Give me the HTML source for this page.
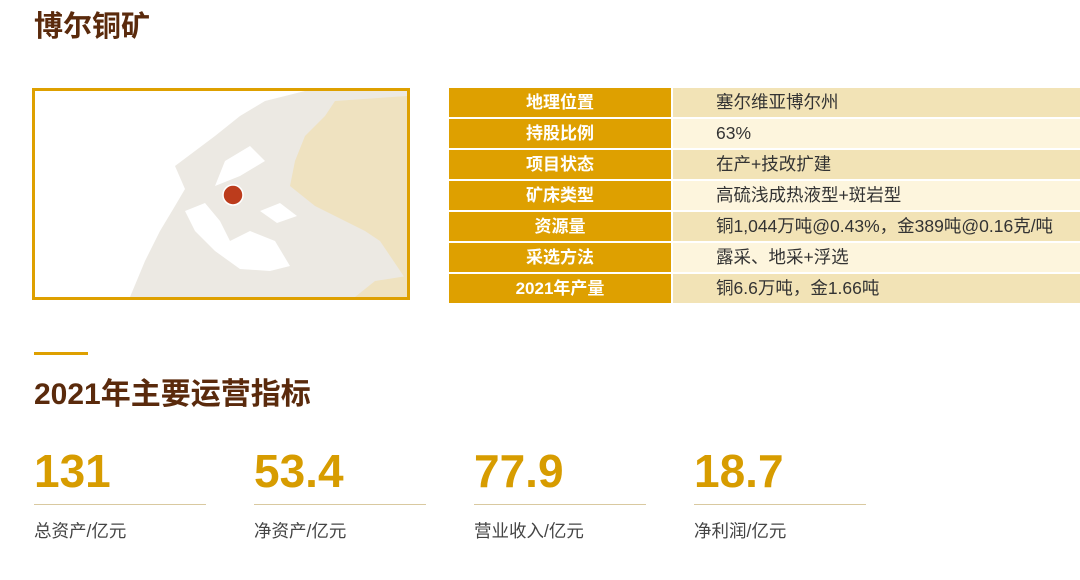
<!DOCTYPE html>
<html><head><meta charset="utf-8"><style>
body{margin:0;width:1080px;height:580px;background:#fff;font-family:"Liberation Sans","Noto Sans CJK SC",sans-serif;position:relative;overflow:hidden}
.t{position:absolute;left:34px;top:3px;font-size:29px;font-weight:bold;color:#5a2a0c}
.map{position:absolute;left:32px;top:88px;width:372px;height:206px;border:3px solid #dea000;overflow:hidden;background:#fff}
table{position:absolute;left:449px;top:88px;width:631px;border-collapse:collapse}
td{height:29px;line-height:29px;padding:0;border-bottom:2px solid #fff;font-size:17.5px;color:#333;vertical-align:middle;white-space:nowrap}
td.l{width:222px;background:#dea000;color:#fff;font-weight:bold;text-align:center;border-right:2px solid #fff;font-size:17px}
td.v{padding-left:43px}
tr:nth-child(odd) td.v{background:#f2e3b6}
tr:nth-child(even) td.v{background:#fdf5dd}
.bar{position:absolute;left:34px;top:352px;width:54px;height:3px;background:#dea000}
.h{position:absolute;left:34px;top:369px;font-size:30px;font-weight:bold;color:#5a2a0c}
.k{position:absolute;top:443px;width:172px;border-bottom:1px solid #d9c9a0;height:61px}
.k b{font-size:46px;color:#d79c00;line-height:56px}
.c{position:absolute;top:518px;font-size:17.5px;color:#444}
</style></head><body>
<div class="t">博尔铜矿</div>
<div class="map"><svg width="372" height="206" viewBox="0 0 372 206">
<path d="M95 206 L110 170 L125 140 L140 115 L150 98 L140 75 L160 60 L180 45 L205 25 L230 10 L270 0 L372 0 L372 206 Z" fill="#ece9e3"/>
<path d="M260 70 L270 45 L290 25 L300 10 L372 5 L372 190 L345 150 L330 140 L310 130 L280 115 L255 95 Z" fill="#efe2c0"/>
<path d="M320 206 L340 190 L372 185 L372 206 Z" fill="#efe2c0"/>
<path d="M150 120 L170 112 L185 130 L195 150 L215 140 L240 150 L255 175 L235 180 L205 178 L180 160 L160 140 Z" fill="#fff"/>
<path d="M225 120 L245 112 L262 125 L242 132 Z" fill="#fff"/>
<path d="M180 95 L190 70 L215 55 L230 70 L205 85 Z" fill="#fff"/>
<path d="M0 0 L200 0 L160 20 L140 40 L120 60 L110 100 L100 130 L80 206 L0 206 Z" fill="#fff"/>
<circle cx="198" cy="104" r="10" fill="#bc3c1c" stroke="#fff" stroke-width="1.5"/>
</svg></div>
<table>
<tr><td class="l">地理位置</td><td class="v">塞尔维亚博尔州</td></tr>
<tr><td class="l">持股比例</td><td class="v">63%</td></tr>
<tr><td class="l">项目状态</td><td class="v">在产+技改扩建</td></tr>
<tr><td class="l">矿床类型</td><td class="v">高硫浅成热液型+斑岩型</td></tr>
<tr><td class="l">资源量</td><td class="v">铜1,044万吨@0.43%，金389吨@0.16克/吨</td></tr>
<tr><td class="l">采选方法</td><td class="v">露采、地采+浮选</td></tr>
<tr><td class="l">2021年产量</td><td class="v">铜6.6万吨，金1.66吨</td></tr>
</table>
<div class="bar"></div>
<div class="h">2021年主要运营指标</div>
<div class="k" style="left:34px"><b>131</b></div>
<div class="k" style="left:254px"><b>53.4</b></div>
<div class="k" style="left:474px"><b>77.9</b></div>
<div class="k" style="left:694px"><b>18.7</b></div>
<div class="c" style="left:34px">总资产/亿元</div>
<div class="c" style="left:254px">净资产/亿元</div>
<div class="c" style="left:474px">营业收入/亿元</div>
<div class="c" style="left:694px">净利润/亿元</div>
</body></html>
